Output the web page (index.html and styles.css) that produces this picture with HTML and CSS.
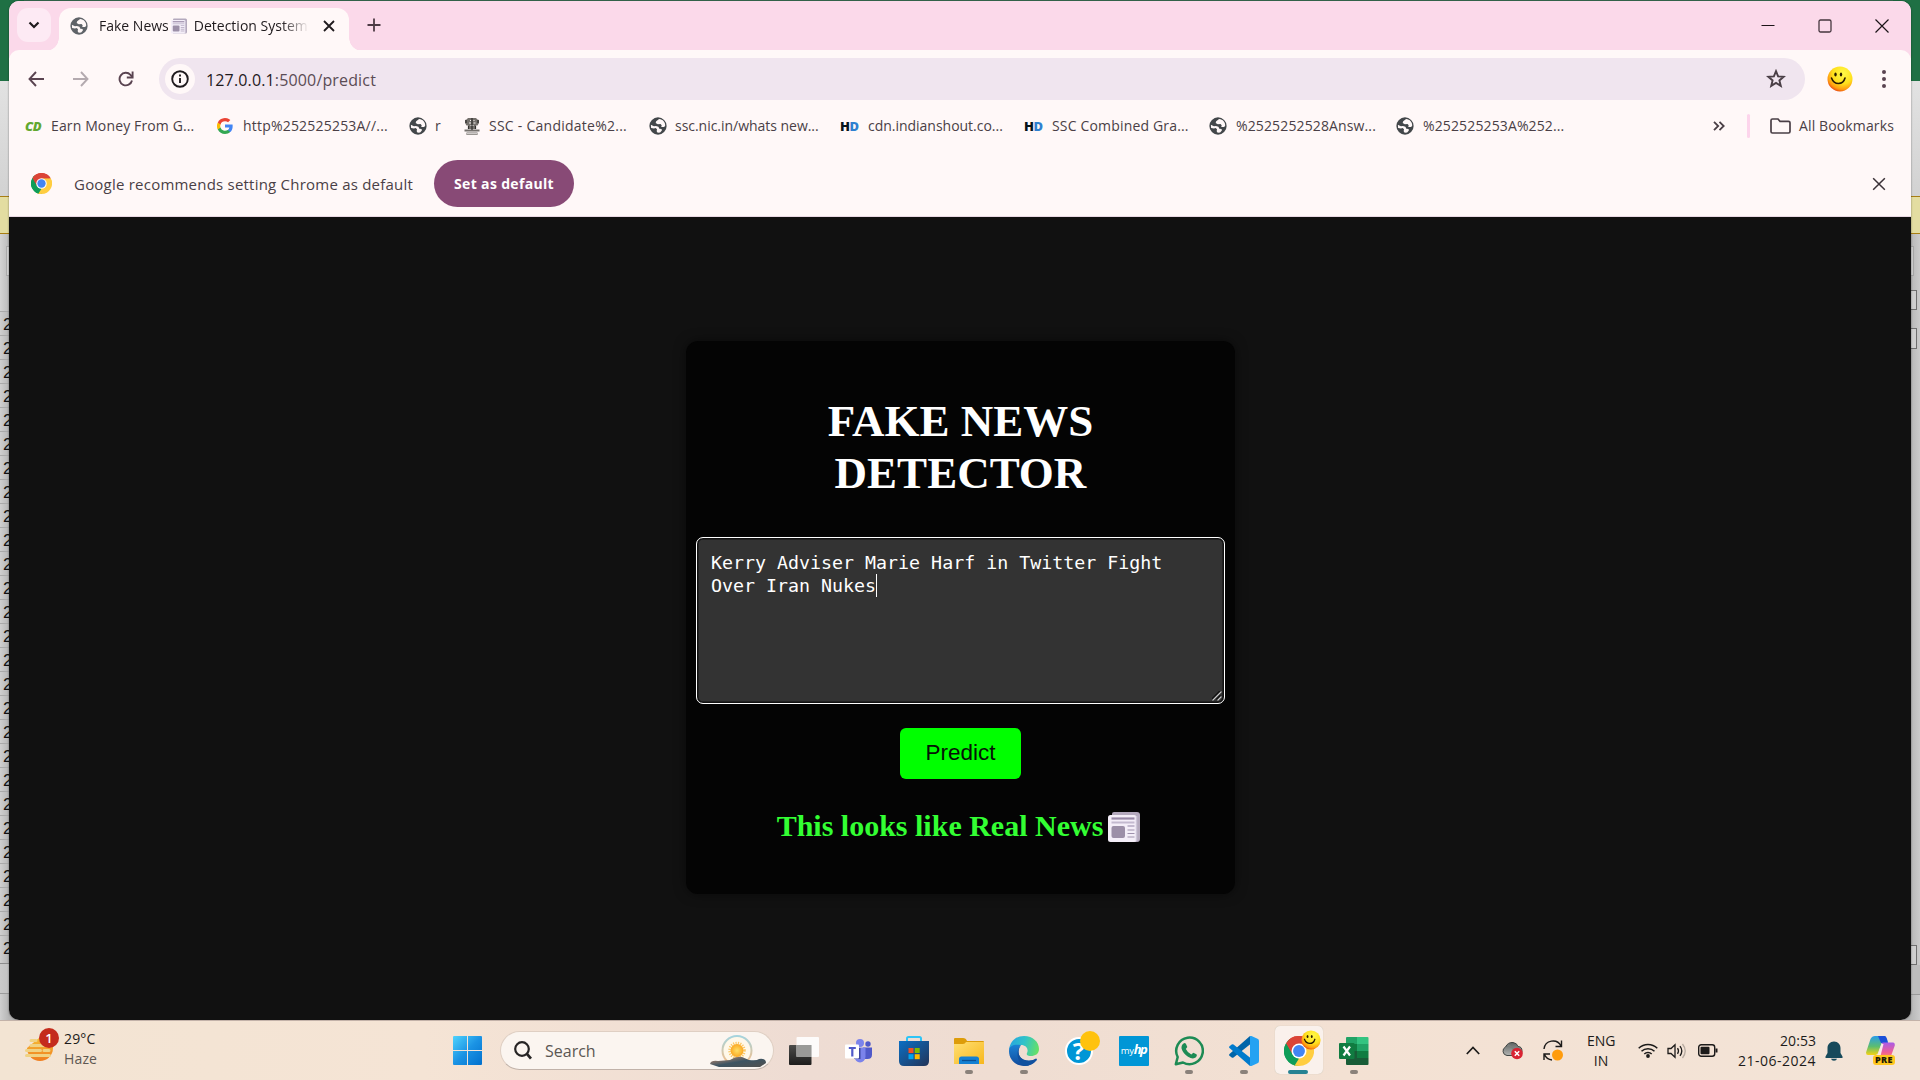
FILE: index.html
```html
<!DOCTYPE html>
<html lang="en">
<head>
<meta charset="utf-8">
<title>Fake News Detection System</title>
<link rel="stylesheet" href="styles.css">
</head>
<body>
<svg class="defs" width="0" height="0" aria-hidden="true">
  <defs>
    <symbol id="globe" viewBox="0 0 20 20">
      <circle cx="10" cy="10" r="9.6" fill="currentColor"/>
      <path d="M11.2 2.2 8 4.6l-.6 2 2.4 1.5 3-.3 1.3 1.3-.5 1.9 3.2.2 1.2-1.4C18.3 5.600 15.500 2.700 11.200 2.200zM2.100 8.500l.2 3.600 3.200.6 1.900-.5 1.500 1.300-.4 2.300 1.200 1.800 2.700-.4 1.900-2.200-.3-1.700-2.500-.3-1-2.300-2.800-.8-2.200.3z" fill="#fff8f8"/>
    </symbol>
    <symbol id="paper" viewBox="0 0 32 32">
      <path d="M4 3Q4 1 6 1h23q3 0 3 3v24q0 3-3 3H4z" fill="#b4a9bd"/>
      <rect x="0" y="4" width="28.500" height="27" rx="2.500" fill="#f4eef8"/>
      <path d="M28.500 5v25" stroke="#cdc5d8" stroke-width="1.500"/>
      <path d="M3.500 7.500h23" stroke="#9888a6" stroke-width="2.200"/>
      <path d="M3.500 11.500h23M19.500 15h7" stroke="#c3b9cf" stroke-width="1.800"/>
      <path d="M19.500 19h7M19.500 22.500h7M19.500 26h7" stroke="#9e91ac" stroke-width="1.200"/>
      <rect x="3.500" y="15" width="13.500" height="12" rx="2" fill="#9c8fa8"/>
    </symbol>
    <symbol id="chrome" viewBox="0 0 48 48">
      <path d="M24 24 3.200 12A24 24 0 0 1 44.800 12z" fill="#db4437"/>
      <path d="M24 24 44.800 12A24 24 0 0 1 24 48z" fill="#ffcd40"/>
      <path d="M24 24v24A24 24 0 0 1 3.200 12z" fill="#0f9d58"/>
      <path d="M24 12h20.800q3.200 6 3.200 12L34.400 18z" fill="#ffcd40"/>
      <path d="M13.600 30 3.200 12Q6 7 10 4.500L24 24z" fill="#0f9d58"/>
      <path d="M34.400 30 24 48q-5.500 0-10-2L24 24z" fill="#ffcd40"/>
      <path d="M3.200 12A24 24 0 0 1 44.800 12H24L13.600 30z" fill="#db4437"/>
      <path d="M3.200 12 13.600 30 24 36l-7 11A24 24 0 0 1 3.200 12z" fill="#0f9d58"/>
      <circle cx="24" cy="24" r="12" fill="#fff"/>
      <circle cx="24" cy="24" r="9.500" fill="#4285f4"/>
    </symbol>
    <radialGradient id="face" cx="62%" cy="28%" r="75%"><stop offset="0" stop-color="#fff94a"/><stop offset=".55" stop-color="#ffe01c"/><stop offset=".85" stop-color="#ff9a10"/><stop offset="1" stop-color="#e84a10"/></radialGradient>
    <symbol id="smiley" viewBox="0 0 26 26">
      <circle cx="13" cy="13" r="12.500" fill="url(#face)"/>
      <ellipse cx="8.500" cy="8.500" rx="1.200" ry="2" fill="#2a1a00"/>
      <ellipse cx="14" cy="8.500" rx="1.200" ry="2" fill="#2a1a00"/>
      <path d="M4.500 12q2 5.500 7 5.500t6.500-5.500" fill="none" stroke="#2a1a00" stroke-width="1.600" stroke-linecap="round"/>
    </symbol>
    <symbol id="cross" viewBox="0 0 12 12"><path d="M1 1l10 10M11 1 1 11" stroke="currentColor" fill="none"/></symbol>
    <linearGradient id="winlogo" x1="0" y1="0" x2="1" y2="1"><stop offset="0" stop-color="#4fd3fd"/><stop offset=".5" stop-color="#1b93e4"/><stop offset="1" stop-color="#0170cd"/></linearGradient>
    <linearGradient id="rim" x1="0" y1="0" x2="0" y2="1"><stop offset="0" stop-color="#a5d4de"/><stop offset="1" stop-color="#f9bd84"/></linearGradient>
    <radialGradient id="sun"><stop offset="0" stop-color="#ffdf65"/><stop offset="1" stop-color="#fba823"/></radialGradient>
    <linearGradient id="hill" x1="0" y1="0" x2="1" y2="1"><stop offset="0" stop-color="#cc8f6d"/><stop offset=".5" stop-color="#3c5463"/><stop offset="1" stop-color="#53514e"/></linearGradient>
    <linearGradient id="dark" x1="0" y1="0" x2="0" y2="1"><stop offset="0" stop-color="#4c4c4a"/><stop offset="1" stop-color="#1d1d1c"/></linearGradient>
    <linearGradient id="store" x1="0" y1="0" x2="1" y2="1"><stop offset="0" stop-color="#0b6fc4"/><stop offset="1" stop-color="#223458"/></linearGradient>
    <linearGradient id="folder" x1="0" y1="0" x2="1" y2="1"><stop offset="0" stop-color="#ffdf73"/><stop offset="1" stop-color="#f7b71d"/></linearGradient>
    <linearGradient id="edge" x1="0" y1=".3" x2="1" y2=".5"><stop offset="0" stop-color="#27a5e0"/><stop offset=".5" stop-color="#30c3c8"/><stop offset="1" stop-color="#65e068"/></linearGradient>
    <linearGradient id="edgelow" x1="0" y1="0" x2="0" y2="1"><stop offset="0" stop-color="#1b82d5"/><stop offset="1" stop-color="#114a9b"/></linearGradient>
    <linearGradient id="haze" x1="0" y1="0" x2="0" y2="1"><stop offset="0" stop-color="#f5bb35"/><stop offset="1" stop-color="#f07d1e"/></linearGradient>
    <linearGradient id="pilotA" x1="0" y1="0" x2="0" y2="1"><stop offset="0" stop-color="#2a9de8"/><stop offset=".55" stop-color="#5cbd70"/><stop offset="1" stop-color="#f5d312"/></linearGradient>
    <linearGradient id="pilotB" x1="0" y1="0" x2="0" y2="1"><stop offset="0" stop-color="#a85be8"/><stop offset=".6" stop-color="#f05f94"/><stop offset="1" stop-color="#ff9c50"/></linearGradient>
    <linearGradient id="cloud" x1="0" y1="0" x2="0" y2="1"><stop offset="0" stop-color="#5e6463"/><stop offset="1" stop-color="#b3b4b2"/></linearGradient>
  </defs>
</svg>

<div class="desktop">
  <div class="sheet">
    <div class="sheet-left">
      <div class="sheet-title"></div>
      <div class="sheet-ribbon"></div>
      <div class="sheet-notice"></div>
      <div class="sheet-formula"><i></i></div>
      <ol class="sheet-rows">
        <li>2</li><li>2</li><li>2</li><li>2</li><li>2</li><li>2</li><li>2</li><li>2</li><li>2</li>
        <li>2</li><li>2</li><li>2</li><li>2</li><li>2</li><li>2</li><li>2</li><li>2</li><li>2</li>
        <li>2</li><li>2</li><li>2</li><li>2</li><li>2</li><li>2</li><li>2</li><li>2</li><li>2</li>
      </ol>
      <div class="sheet-tabs"></div>
    </div>
    <div class="sheet-right">
      <div class="sheet-title"></div>
      <div class="sheet-ribbon"></div>
      <div class="sheet-notice"></div>
      <div class="scroll">
        <i class="field"></i><i class="box"></i><i class="box thumb"></i><i class="box end"></i>
      </div>
      <div class="sheet-tabs"></div>
    </div>
  </div>

  <main class="window">
    <header class="tabstrip">
      <button class="tab-search"><svg width="12" height="8" viewBox="0 0 12 8"><path d="M1.500 1.500 6 6l4.500-4.500" fill="none" stroke="#1f1a1d" stroke-width="2.200"/></svg></button>
      <div class="tab">
        <svg class="favicon grey" width="18" height="18"><use href="#globe"/></svg>
        <div class="tab-title"><span>Fake News</span><svg width="16" height="16"><use href="#paper"/></svg><span>Detection System</span></div>
        <svg class="tab-close" width="12" height="12"><use href="#cross"/></svg>
      </div>
      <svg class="new-tab" width="14" height="14" viewBox="0 0 14 14"><path d="M7 .5v13M.5 7h13" stroke="#4d3a45" stroke-width="1.800"/></svg>
      <div class="controls">
        <svg width="14" height="14" viewBox="0 0 14 14"><path d="M.5 6.500h13" stroke="#1c1418" stroke-width="1.200"/></svg>
        <svg width="14" height="14" viewBox="0 0 14 14"><rect x="1" y="1" width="12" height="12" rx="1.500" fill="none" stroke="#45363e" stroke-width="1.300"/></svg>
        <svg width="14" height="14" viewBox="0 0 14 14"><path d="M.5.5l13 13M13.500.5l-13 13" stroke="#1c1418" stroke-width="1.200"/></svg>
      </div>
    </header>

    <nav class="toolbar">
      <svg width="16" height="16" viewBox="0 0 16 16"><path d="M8 1 1.500 8 8 15M1.500 8H16" fill="none" stroke="#5a4451" stroke-width="1.900"/></svg>
      <svg width="16" height="16" viewBox="0 0 16 16"><path d="m8 1 6.500 7L8 15M14.500 8H0" fill="none" stroke="#b4aaaf" stroke-width="1.900"/></svg>
      <svg width="16" height="16" viewBox="0 0 16 16"><path d="M14 9.500A6.300 6.300 0 1 1 12.500 3.800L14.500 6" fill="none" stroke="#5a4451" stroke-width="1.900"/><path d="M14.600.5v6H8.800" fill="none" stroke="#5a4451" stroke-width="1.900"/></svg>
      <div class="omnibox">
        <span class="site-info"><svg width="18" height="18" viewBox="0 0 18 18"><circle cx="9" cy="9" r="7.800" fill="none" stroke="#1f1a1d" stroke-width="1.900"/><path d="M9 8v5M9 4.500v2" stroke="#1f1a1d" stroke-width="1.900"/></svg></span>
        <span class="url"><b>127.0.0.1</b>:5000/predict</span>
        <svg class="star" width="20" height="20" viewBox="0 0 20 20"><path d="m10 2.200 2.100 5.200 5.600.4-4.300 3.600 1.400 5.500L10 13.900l-4.800 3 1.400-5.500L2.300 7.800l5.600-.4z" fill="none" stroke="#4a3f46" stroke-width="1.900"/></svg>
      </div>
      <svg class="avatar" width="26" height="26"><use href="#smiley"/></svg>
      <svg class="menu" width="4" height="18" viewBox="0 0 4 18"><g fill="#5a4451"><circle cx="2" cy="2" r="2"/><circle cx="2" cy="9" r="2"/><circle cx="2" cy="16" r="2"/></g></svg>
    </nav>

    <div class="bookmarks">
      <div class="links">
        <a><span class="cd">CD</span>Earn Money From G...</a>
        <a><svg width="16" height="16" viewBox="0 0 48 48"><path d="M47 24.500c0-1.600-.1-3.200-.4-4.700H24v9h13a11 11 0 0 1-4.800 7.300v6h7.800c4.500-4.200 7-10.300 7-17.600z" fill="#4285f4"/><path d="M24 48c6.500 0 12-2.100 15.900-5.900l-7.700-6A14.500 14.500 0 0 1 10.500 28.500h-8v6.200A24 24 0 0 0 24 48z" fill="#34a853"/><path d="M10.500 28.500a14.400 14.400 0 0 1 0-9.100v-6.200h-8a24 24 0 0 0 0 21.500z" fill="#fbbc04"/><path d="M24 9.500c3.500 0 6.700 1.200 9.200 3.600l6.800-6.800A24 24 0 0 0 2.500 13.200l8 6.200A14.300 14.300 0 0 1 24 9.500z" fill="#ea4335"/></svg>http%252525253A//...</a>
        <a><svg class="favicon" width="18" height="18"><use href="#globe"/></svg>r</a>
        <a><svg width="18" height="18" viewBox="0 0 18 18"><path d="M5 1h8l1.500 1.500 1.500.5v3l-1.500 2.500H13V12H5V8.500H3.500L2 6V3l1.500-.5zM1.500 12.500h15v2h-15zM3.500 15.500h11V18h-11z" fill="#74706c"/><path d="M7 3.500h1M10.500 3.500h1M6 6h2M10.500 6h2M7.500 8.500h3M3 11h2M13 11h2M4 16.800h10" stroke="#f5f1ef"/><path d="M9 1v12M5.500 9v3M12.500 9v3M3 3v3M15 3v3" stroke="#302e2c" stroke-width="1.200"/></svg>SSC - Candidate%2...</a>
        <a><svg class="favicon" width="18" height="18"><use href="#globe"/></svg>ssc.nic.in/whats new...</a>
        <a><span class="hd">H<em>D</em></span>cdn.indianshout.co...</a>
        <a><span class="hd">H<em>D</em></span>SSC Combined Gra...</a>
        <a><svg class="favicon" width="18" height="18"><use href="#globe"/></svg>%2525252528Answ...</a>
        <a><svg class="favicon" width="18" height="18"><use href="#globe"/></svg>%252525253A%252...</a>
      </div>
      <svg width="12" height="10" viewBox="0 0 12 10"><path d="M1 .8 5.200 5 1 9.200M6.500.8 10.700 5 6.500 9.200" fill="none" stroke="#4a3f46" stroke-width="1.800"/></svg>
      <i class="divider"></i>
      <svg class="folder" width="21" height="16" viewBox="0 0 21 16"><path d="M1 2.500Q1 1 2.500 1H8l2 2.300h8.500Q20 3.300 20 4.800v8.700q0 1.500-1.500 1.500h-16Q1 15 1 13.500z" fill="none" stroke="#4a3f46" stroke-width="1.700"/></svg>
      <span>All Bookmarks</span>
    </div>

    <div class="infobar">
      <svg width="21" height="21"><use href="#chrome"/></svg>
      <p>Google recommends setting Chrome as default</p>
      <button>Set as default</button>
      <svg class="dismiss" width="14" height="14"><use href="#cross"/></svg>
    </div>

    <section class="page">
      <div class="card">
        <h1>FAKE NEWS<br>DETECTOR</h1>
        <div class="news">Kerry Adviser Marie Harf in Twitter Fight<br>Over Iran Nukes<i class="caret"></i>
          <svg class="grip" width="10" height="10" viewBox="0 0 10 10"><path d="M0 9 9 0M5 9l4-4" stroke="#111" stroke-width="3"/><path d="M.5 9.500 9.500.5M5.500 9.500l4-4" stroke="#c8c8c8" stroke-width="1.300"/></svg>
        </div>
        <button class="predict">Predict</button>
        <h2>This looks like Real News<svg width="32" height="32"><use href="#paper"/></svg></h2>
      </div>
    </section>
  </main>

  <footer class="taskbar">
    <div class="weather">
      <div class="weather-icon">
        <svg width="32" height="36" viewBox="0 0 32 36"><path d="M2 21a13 13 0 0 0 26 0V11H14z" fill="url(#haze)"/><path d="M6 13.500h5M6 18.500h15M1.500 23.500h14M19 23.500h5M1.500 28.500h23" stroke="#f0d283" stroke-width="3" stroke-linecap="round"/></svg>
        <b>1</b>
      </div>
      <p>29°C<span>Haze</span></p>
    </div>
    <div class="apps">
      <div class="app start"><svg width="29" height="29" viewBox="0 0 29 29"><path d="M0 1q0-1 1-1h13v14H0zM15 0h13q1 0 1 1v13H15zM0 15h14v14H1q-1 0-1-1zM15 15h14v13q0 1-1 1H15z" fill="url(#winlogo)"/></svg></div>
      <div class="search">
        <svg width="18" height="19" viewBox="0 0 18 19"><circle cx="8" cy="8" r="6.800" fill="none" stroke="#262424" stroke-width="2.200"/><path d="m12.700 12.700 4.300 5" stroke="#262424" stroke-width="2.800"/></svg>
        <span>Search</span>
        <svg class="scene" width="56" height="33" viewBox="0 0 56 33"><circle cx="27" cy="15.500" r="14.500" fill="#fff8e9" stroke="url(#rim)" stroke-width="2"/><circle cx="27" cy="15.500" r="7.500" fill="none" stroke="#fbc763" stroke-width="2.500" stroke-dasharray="1.200 1.200"/><circle cx="27" cy="15.500" r="6.500" fill="url(#sun)"/><path d="M0 29q1-4 8-3l12-1q6-4 12-3l7 3q8 1 10-1 7-1 7 4l-6 4H9z" fill="url(#hill)"/></svg>
      </div>
      <div class="app"><svg width="30" height="28" viewBox="0 0 30 28"><rect y="8" width="22.500" height="20" rx="1" fill="url(#dark)"/><rect x="7.500" width="22.500" height="20" rx="1" fill="#fff" opacity=".88"/><rect x="7.500" y="8" width="15" height="12" fill="#9a9a98"/></svg></div>
      <div class="app"><svg width="27" height="24" viewBox="0 0 27 24"><circle cx="15" cy="4" r="4" fill="#7b83eb"/><circle cx="23" cy="5" r="2.700" fill="#5059c9"/><path d="M18 8.500h9v7q0 4.500-4.500 4.500H18z" fill="#5059c9"/><path d="M9.500 8.500h11v9a5.500 6 0 0 1-11 0z" fill="#7b83eb"/><path d="M9 9h6.500v11H9z" fill="#3c449f"/><rect y="5.500" width="14" height="14" rx="1" fill="#fff"/><path d="M3.800 9h7M7.300 9v8.500" stroke="#5059c9" stroke-width="2.200"/></svg></div>
      <div class="app"><svg width="30" height="30" viewBox="0 0 30 30"><path d="M8 7V2.500Q8 1 9.500 1h11Q22 1 22 2.500V7" fill="none" stroke="#2ec4f6" stroke-width="2"/><path d="M0 5h30v20q0 5-5 5H5q-5 0-5-5z" fill="url(#store)"/><path d="M9.500 12h5v5h-5z" fill="#f25022"/><path d="M15.700 12h5v5h-5z" fill="#7fba00"/><path d="M9.500 18.200h5v5h-5z" fill="#00a4ef"/><path d="M15.700 18.200h5v5h-5z" fill="#ffb900"/></svg></div>
      <div class="app open"><svg width="30" height="26" viewBox="0 0 30 26"><path d="M0 1q0-1 1-1h8q3 0 4 3h16q1 0 1 1v8H0z" fill="#dd9c0a"/><path d="M0 6h9q2 0 3-2h18v22H0z" fill="url(#folder)"/><path d="M5 26v-5q0-2.500 2.500-2.500h15q2.500 0 2.500 2.500v5z" fill="#1480d3"/><path d="M8 22.500h14" stroke="#0a4f94" stroke-width="1.300"/></svg></div>
      <div class="app open"><svg width="30" height="30" viewBox="0 0 30 30"><path d="M0 14C1 5 7 0 15 0c9 0 15 6 15 13 0 5-4 7-8 7-3 0-5-1-4-3 2-4-1-8-6-8C6 9 2 11 0 14z" fill="url(#edge)"/><path d="M0 15C0 9 6 8 12 9c-5 5-3 16 8 16 3 0 5-1 7-2q1 0 1 1-5 6-13 6C6 30 0 23 0 15z" fill="url(#edgelow)"/><path d="M12 9.500c-4 4-4 15 8 15 3 0 5-1 7-2q1 0 .6 1-4.600 6.500-11.600 6.500C8 28 6 14 12 9.500z" fill="#11519f"/></svg></div>
      <div class="app"><div class="help"><svg width="28" height="28" viewBox="0 0 28 28"><circle cx="14" cy="14" r="13" fill="#0096d6" stroke="#fff" stroke-width="2"/></svg><b>?</b><i></i></div></div>
      <div class="app"><div class="myhp">my<b>hp</b></div></div>
      <div class="app open"><svg width="30" height="30" viewBox="0 0 30 30"><path d="M1.800 28.200 3.700 21A13.300 13.300 0 1 1 9 26.500z" fill="none" stroke="#1d8b54" stroke-width="2.500" stroke-linejoin="round"/><path d="M9.500 7.500Q11 6.500 12 8l1.300 3-1.500 2q2 4 5.500 5.500l2-1.800 3.200 1.600q1 1-.5 3-3 2.500-8-.5-5-3.300-6.400-8Q7 9.500 9.500 7.500z" fill="#1d8b54"/></svg></div>
      <div class="app open"><svg width="30" height="30" viewBox="0 0 30 30"><path d="m21.500 8-17 13.500q-1 .7-1.800 0L.5 19.700q-.8-.8 0-1.700L21 0z" fill="#0065a9"/><path d="M21.500 22 4.500 8.500q-1-.7-1.800 0L.5 10.300q-.8.800 0 1.700L21 30z" fill="#007acc"/><path d="M21 0q.7-.3 1.500 0l6 2.700Q30 3.300 30 5v20q0 1.700-1.500 2.300l-6 2.700q-.8.300-1.500 0z" fill="#25a2f2"/></svg></div>
      <div class="app active"><div class="chrome"><svg width="30" height="30"><use href="#chrome"/></svg><svg class="profile" width="20" height="20"><use href="#smiley"/></svg></div></div>
      <div class="app open"><svg width="30" height="28" viewBox="0 0 30 28"><path d="M7 1q0-1 1-1h10v7H7z" fill="#21a366"/><path d="M18 0h10.500Q29.500 0 29.500 1v6H18z" fill="#33c481"/><path d="M7 7h11v7H7z" fill="#107c41"/><path d="M18 7h11.500v7H18z" fill="#21a366"/><path d="M7 14h11v7H7z" fill="#185c37"/><path d="M18 14h11.500v7H18z" fill="#107c41"/><path d="M7 21h22.500v6q0 1-1 1H8q-1 0-1-1z" fill="#185c37"/><rect y="6" width="15.500" height="16" rx="1" fill="#107c41"/><path d="m4.500 9.500 6.500 9M11 9.500l-6.500 9" stroke="#fff" stroke-width="2.200"/></svg></div>
    </div>
    <div class="tray">
      <svg width="14" height="9" viewBox="0 0 14 9"><path d="m.8 8 6.200-6.500L13.200 8" fill="none" stroke="#1c1b1a" stroke-width="1.700"/></svg>
      <svg width="22" height="19" viewBox="0 0 22 19"><path d="M5 14.500A4.500 4.500 0 0 1 3.500 6Q6 1 11 1.500q4 .5 5 4 4 0 4 4.500t-4 4.500z" fill="url(#cloud)" stroke="#424744"/><path d="m6 4 11 7" stroke="#7b7f7c" stroke-width="2"/><circle cx="15" cy="12.500" r="5.800" fill="#d92332"/><path d="m12.800 10.300 4.400 4.400M17.200 10.300l-4.400 4.400" stroke="#fff" stroke-width="1.500"/></svg>
      <svg width="22" height="22" viewBox="0 0 22 22"><path d="M2 9A9 9 0 0 1 19 6M19.500.5V6.500h-6M2 20v-6h6M2.500 14.500A9 9 0 0 0 10 20" fill="none" stroke="#1c1b1a" stroke-width="1.400"/><circle cx="15.500" cy="15" r="5.500" fill="#ff9c0d"/></svg>
      <p class="lang">ENG<br>IN</p>
      <svg width="20" height="15" viewBox="0 0 20 15"><g fill="none" stroke="#1c1b1a" stroke-width="1.500"><path d="M.7 5.200a13.300 13.300 0 0 1 18.600 0M3.500 8.300a9.300 9.300 0 0 1 13 0M6.300 11a5.300 5.300 0 0 1 7.400 0"/></g><circle cx="10" cy="13" r="1.900" fill="#1c1b1a"/></svg>
      <svg width="20" height="16" viewBox="0 0 20 16"><g fill="none" stroke="#1c1b1a" stroke-width="1.300"><path d="M1 5.500h3L8 1.800v12.400L4 10.500H1zM10.500 5.200q2 2.800 0 5.600M13 3.200q3.600 4.800 0 9.600"/><path d="M15.500 1q5.500 7 0 14" stroke="#b7aba1"/></g></svg>
      <svg width="20" height="13" viewBox="0 0 20 13"><rect x=".7" y=".7" width="16" height="11.600" rx="2.500" fill="none" stroke="#1c1b1a" stroke-width="1.400"/><rect x="2.500" y="2.700" width="9" height="7.600" rx="1" fill="#1c1b1a"/><path d="M18.500 4.500v4" stroke="#1c1b1a" stroke-width="2"/></svg>
      <p class="clock"><span>20:53</span><br>21-06-2024</p>
      <svg width="18" height="20" viewBox="0 0 18 20"><path d="M9 .5c4 0 6.500 3 6.500 6.500v5l2 3.500V17H.5v-1.500l2-3.500V7C2.500 3.500 5 .5 9 .5zM6 17.700h6q-.5 2-3 2t-3-2z" fill="#174a5b"/></svg>
      <div class="copilot">
        <svg width="29" height="24" viewBox="0 0 29 24"><path d="M9 0h10l3 6.500-6-.5-4.500 12-2 1H2q-2 0-2-2.500L4.500 3Q6 0 9 0z" fill="url(#pilotA)"/><path d="M12 0h7q2 1 3 7h-7z" fill="#1b4fd8"/><path d="M16.500 6.500H27q2 0 1.800 3L25 20q-1 3-4 3H8q3 0 4.500-4z" fill="url(#pilotB)"/><path d="m15.500 8-4 12h3l3-12z" fill="#fbe7ea"/></svg>
        <b>PRE</b>
      </div>
    </div>
  </footer>
</div>
</body>
</html>
```
FILE: styles.css
```css
* { box-sizing: border-box; }
body { margin: 0; overflow: hidden; font-family: "Open Sans", "Noto Sans", sans-serif; }
p, h1, h2, ol { margin: 0; padding: 0; }
svg { display: block; flex: none; }
button { border: 0; padding: 0; font-family: inherit; }
.defs { position: absolute; }

.desktop { position: relative; width: 1920px; height: 1080px; overflow: hidden; background: #c9c9c9; }

/* spreadsheet window behind the browser */
.sheet { display: flex; justify-content: space-between; height: 1020px; background: linear-gradient(#3a7055 0 2px, #c9c9c9 2px); }
.sheet-left, .sheet-right { display: flex; flex-direction: column; width: 24px; height: 1020px; background: linear-gradient(90deg, #d6d6d6, #bdbdbd); }
.sheet-right { width: 27px; background: linear-gradient(90deg, #b4b4b4 60%, #cbcbcb); }
.sheet-left { background: linear-gradient(90deg, #cfcfcf, #b5b5b5 9px); }
.sheet-title { height: 81px; background: #1f7044; }
.sheet-ribbon { height: 115px; background: linear-gradient(#e2e2e2, #d2d2d2); }
.sheet-notice { height: 38px; background: #e3dda1; border: solid #a87e12; border-width: 1px 0; }
.sheet-formula { height: 77px; padding: 12px 0 0 6px; background: linear-gradient(90deg, #d4d4d4, #bbb 9px); }
.sheet-formula i { display: block; width: 18px; height: 30px; border: 1px solid #aaa; background: #d4d4d4; }
.sheet-rows { list-style: none; border-bottom: 1px solid #8c8c8c; height: 653px; }
.sheet-rows li { height: 24px; padding-left: 3px; border-top: 1px solid #a9a9a9; font: 17px/26px "Liberation Sans", sans-serif; color: #111; }
.sheet-tabs { height: 30px; border-bottom: 1px solid #9b9b9b; background: linear-gradient(90deg, #cacaca, #b5b5b5); }
.scroll { display: flex; flex-direction: column; height: 731px; padding-top: 12px; }
.scroll i { display: block; width: 21px; height: 30px; border: 1px solid #a5a5a5; background: #cfcfcf; }
.scroll .box { width: 24px; height: 20px; margin-top: 14px; border-color: #6f6f6f; }
.scroll .thumb { margin-top: 18px; height: 21px; }
.scroll .end { margin-top: auto; margin-bottom: 0; }
.sheet-right .sheet-tabs { border-bottom: 1px solid #999; background: #bdbdbd; }

/* browser window */
.window { position: absolute; left: 9px; top: 1px; width: 1902px; height: 1019px; display: flex; flex-direction: column; overflow: hidden; border-radius: 10px; background: #fff8f8; box-shadow: 0 0 2px rgba(0, 0, 0, .5); }
.tabstrip { display: flex; height: 57px; padding: 7px 22px 0 8px; margin-bottom: -8px; background: #fbd9ea; }
.tab-search { display: grid; place-items: center; width: 34px; height: 34px; border-radius: 11px; background: #fdeaf4; }
.tab { position: relative; display: flex; align-items: center; width: 290px; height: 43px; margin-left: 8px; padding: 0 10px 8px 11px; border-radius: 12px 12px 0 0; background: #fff8f8; }
.tab::before, .tab::after { content: ""; position: absolute; bottom: 0; width: 13px; height: 13px; }
.tab::before { left: -13px; background: radial-gradient(circle at 0 0, transparent 12.5px, #fff8f8 13px); }
.tab::after { right: -13px; background: radial-gradient(circle at 100% 0, transparent 12.5px, #fff8f8 13px); }
.favicon { color: #43474a; }
.favicon.grey { color: #5f6368; }
.tab-title { display: flex; align-items: center; gap: 2px; width: 210px; margin: 0 auto 0 11px; overflow: hidden; font-size: 14px; line-height: 22px; white-space: nowrap; color: #1f1a1d; -webkit-mask-image: linear-gradient(90deg, #000 87%, transparent); mask-image: linear-gradient(90deg, #000 87%, transparent); }
.tab-title svg { margin-right: 5px; }
.tab-close { color: #1f1a1d; stroke-width: 1.8; margin-right: 4px; }
.new-tab { margin: 10px 0 0 18px; }
.controls { display: flex; gap: 43px; margin: 11px 0 0 auto; }

.toolbar { position: relative; display: flex; align-items: center; height: 58px; padding-left: 19px; border-radius: 10px 10px 0 0; background: #fff8f8; }
.toolbar > svg { margin-right: 29px; }
.omnibox { display: flex; align-items: center; width: 1646px; height: 42px; margin-left: -4px; padding: 0 19px 0 6px; border-radius: 21px; background: #f0e5ef; }
.site-info { display: grid; place-items: center; width: 30px; height: 30px; border-radius: 50%; background: #fff8f8; }
.url { margin: 1px 0 0 11px; font-size: 16px; letter-spacing: .15px; color: #5b4c55; }
.url b { font-weight: 400; color: #1f1a1d; }
.star { margin-left: auto; }
.toolbar .avatar { margin: 0 0 1px 22px; }
.toolbar .menu { margin: 0 0 0 29px; }

.bookmarks { display: flex; align-items: center; height: 38px; padding: 0 17px 3px 16px; font-size: 14px; letter-spacing: .13px; color: #4a3f46; white-space: nowrap; }
.links { display: grid; grid-template-columns: 192px 192px 54px 186px 191px 184px 185px 187px 1fr; width: 1688px; }
.links a { display: flex; align-items: center; gap: 8px; }
.links a:nth-child(5) { letter-spacing: -.03px; }
.links a:nth-child(8), .links a:nth-child(9) { gap: 9px; letter-spacing: .13px; }
.links a:nth-child(4) { gap: 8px; letter-spacing: .25px; }
.links a:nth-child(7) { gap: 7px; letter-spacing: .17px; }
.links a:nth-child(6) { gap: 7px; letter-spacing: -.02px; }
.links a:nth-child(2) { gap: 10px; letter-spacing: .2px; }
.cd { width: 18px; font: italic 800 13px "Open Sans", sans-serif; letter-spacing: -.5px; color: #62a830; }
.hd { width: 21px; font: 800 13px "Open Sans", sans-serif; letter-spacing: -.5px; color: #06151c; }
.hd em { font-style: normal; color: #2f80d0; }
.divider { width: 3px; height: 24px; margin: 0 20px 0 22px; border-radius: 2px; background: #fdd5ec; }
.folder { margin-right: 8px; }

.infobar { display: flex; align-items: center; height: 71px; padding: 5px 25px 0 22px; border-bottom: 1px solid #e9d9e3; }
.infobar p { margin: 1px 0 0 22px; font-size: 15px; letter-spacing: .22px; color: #4a3f46; }
.infobar button { width: 140px; height: 47px; margin-left: 21px; border-radius: 24px; background: #884a76; color: #fff; font-size: 14px; font-weight: 700; letter-spacing: .33px; }
.dismiss { margin-left: auto; color: #3b3238; stroke-width: 1.3; }

/* page */
.page { display: flex; justify-content: center; flex: 1; padding: 124px 0 0 1px; background: #111; }
.card { display: flex; flex-direction: column; align-items: center; width: 549px; height: 553px; padding-top: 54px; border-radius: 12px; background: #040404; box-shadow: 0 0 12px rgba(0, 0, 0, .5); }
h1 { font: 700 45px/52px "Liberation Serif", serif; text-align: center; color: #fff; }
.news { position: relative; width: 529px; height: 167px; margin-top: 38px; padding: 13px 12px 12px 14px; border: 1px solid #fff; border-radius: 7px; box-shadow: inset 0 0 0 1.500px #111; background: #333; font: 18.300px/23px "DejaVu Sans Mono", "Liberation Mono", monospace; color: #fff; white-space: nowrap; }
.caret { display: inline-block; width: 1px; height: 23px; vertical-align: top; background: #fff; }
.grip { position: absolute; right: 2px; bottom: 2px; }
.predict { width: 121px; height: 51px; margin-top: 24px; padding-bottom: 2px; border-radius: 6px; background: #0f0; font: 22.500px "Liberation Sans", sans-serif; color: #061206; }
h2 { display: flex; margin: 30px 4px 0 0; font: 700 30px/34px "Liberation Serif", serif; color: #33ff33; }
h2 svg { margin: 2px 0 0 5px; width: 32px; }

/* taskbar */
.taskbar { position: absolute; left: 0; top: 1020px; display: flex; width: 1920px; height: 60px; border-top: 1px solid #c3b2a9; background: linear-gradient(90deg, #f3e4d3, #f5e4d5 22%, #eedcd3 42%, #efddd2 52%, #f3e1d3 70%, #f3e4d7); color: #1c1b1a; }
.weather { display: flex; width: 440px; padding: 6px 0 0 25px; }
.weather-icon { position: relative; width: 32px; height: 36px; }
.weather-icon b { position: absolute; left: 14px; top: 1px; width: 20px; height: 20px; border-radius: 50%; background: #c42b1c; color: #fff; font-size: 13px; font-weight: 600; line-height: 20px; text-align: center; }
.weather p { margin: 2px 0 0 7px; font-size: 14px; line-height: 20px; letter-spacing: .15px; }
.weather p span { display: block; color: #5e5852; }
.apps { display: flex; align-items: flex-start; }
.app { position: relative; display: grid; place-items: center; width: 55px; height: 59px; }
.app.start { width: 60px; padding-right: 5px; }
.app.open::after { content: ""; position: absolute; left: 24px; bottom: 6px; width: 8px; height: 4px; border-radius: 2px; background: #8a817a; }
.app.active::before { content: ""; position: absolute; left: 3.500px; top: 5px; width: 48px; height: 48px; border-radius: 5px; background: #faf1ec; box-shadow: 0 0 1px #bba; }
.app.active::after { content: ""; position: absolute; left: 17px; bottom: 6px; width: 20px; height: 4px; border-radius: 2px; background: #268293; }
.search { display: flex; align-items: center; width: 274px; height: 39px; margin: 10px 2px 0 0; padding: 0 7px 0 13px; border: 1px solid #dfcfc3; border-bottom-color: #c1b2a9; border-radius: 20px; background: #fbf5f0; }
.search span { margin-left: 13px; font-size: 16px; color: #5b5753; }
.scene { margin: 1px 0 0 auto; }
.help, .chrome { position: relative; }
.help b { position: absolute; inset: 0; font: 700 24px/28px "Open Sans", sans-serif; text-align: center; color: #fff; }
.help i { position: absolute; left: 15px; top: -6px; width: 20px; height: 20px; border-radius: 50%; background: #ffc20e; }
.profile { position: absolute; left: 17px; top: -6px; }
.myhp { width: 30px; height: 30px; border-radius: 1px; background: #0096d6; color: #fff; font: 400 9.500px/29px "Open Sans", sans-serif; letter-spacing: -.3px; text-align: center; white-space: nowrap; }
.myhp b { font: italic 700 13px "Open Sans", sans-serif; letter-spacing: -1.500px; }

.tray { display: flex; align-items: center; margin-left: auto; padding-right: 25px; font-size: 14px; line-height: 20px; }
.tray > :nth-child(2) { margin-left: 22px; }
.tray > :nth-child(3) { margin-left: 18px; }
.lang { width: 28px; margin-left: 23px; text-align: center; }
.lang + svg { margin-left: 23px; }
.tray > :nth-child(6) { margin-left: 9px; }
.tray > :nth-child(7) { margin-left: 11px; }
.clock { width: 78px; margin-left: 20px; text-align: right; white-space: nowrap; letter-spacing: .5px; }
.clock span { letter-spacing: .05px; }
.tray > :nth-child(9) { margin-left: 9px; }
.copilot { position: relative; width: 29px; height: 29px; margin: 0 0 0 23px; }
.copilot b { position: absolute; left: 7px; top: 19px; width: 22px; height: 10px; border-radius: 3px; background: #ffc71e; font-size: 9px; font-weight: 800; line-height: 10px; letter-spacing: .4px; text-align: center; color: #221b05; }
```
